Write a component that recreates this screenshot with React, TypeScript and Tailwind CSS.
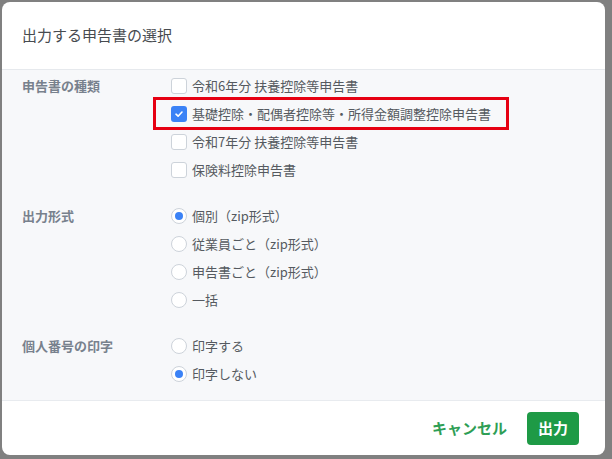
import React from 'react';

const FONT = '"Noto Sans CJK JP", "Noto Sans", sans-serif';

type Opt = { label: string; checked?: boolean; highlight?: boolean };

const kinds: Opt[] = [
  { label: '令和6年分 扶養控除等申告書' },
  { label: '基礎控除・配偶者控除等・所得金額調整控除申告書', checked: true, highlight: true },
  { label: '令和7年分 扶養控除等申告書' },
  { label: '保険料控除申告書' },
];

const formats: Opt[] = [
  { label: '個別（zip形式）', checked: true },
  { label: '従業員ごと（zip形式）' },
  { label: '申告書ごと（zip形式）' },
  { label: '一括' },
];

const printing: Opt[] = [{ label: '印字する' }, { label: '印字しない', checked: true }];

function Checkbox({ checked }: { checked?: boolean }) {
  if (checked) {
    return (
      <span className="w-4 h-4 rounded-[3px] bg-[#3b82f6] flex items-center justify-center flex-shrink-0">
        <svg width="10" height="10" viewBox="0 0 10 10" fill="none">
          <path d="M2 5.2 L4.1 7.2 L8 3" stroke="white" strokeWidth="1.6" strokeLinecap="round" strokeLinejoin="round" />
        </svg>
      </span>
    );
  }
  return <span className="w-4 h-4 rounded-[3px] border border-[#cdd3da] bg-white flex-shrink-0" />;
}

function Radio({ checked }: { checked?: boolean }) {
  return (
    <span className="w-4 h-4 rounded-full border border-[#cdd3da] bg-white flex items-center justify-center flex-shrink-0">
      {checked && <span className="w-2 h-2 rounded-full bg-[#3b82f6]" />}
    </span>
  );
}

function Section({ title, options, kind }: { title: string; options: Opt[]; kind: 'check' | 'radio' }) {
  return (
    <div className="grid grid-cols-[149px_1fr]">
      <div className="h-7 flex items-center text-[13px] font-bold text-[#78818d]">{title}</div>
      <div className="flex flex-col">
        {options.map((o) => (
          <div key={o.label} className="relative h-7 flex items-center gap-[5px] text-[13px] text-[#555a60]">
            {kind === 'check' ? <Checkbox checked={o.checked} /> : <Radio checked={o.checked} />}
            <span>{o.label}</span>
            {o.highlight && (
              <span className="absolute left-[-18px] top-[-3px] w-[356px] h-[33px] border-[3px] border-[#e60012]" />
            )}
          </div>
        ))}
      </div>
    </div>
  );
}

export default function App() {
  return (
    <div className="w-[612px] h-[459px] bg-[#808080] pt-[2px] pl-[2px]" style={{ fontFamily: FONT }}>
      <div className="w-[603px] h-[453px] bg-white rounded-lg overflow-hidden flex flex-col">
        <div className="h-[68px] flex items-center px-5 border-b border-[#e6e9ed] flex-shrink-0">
          <h1 className="text-[15px] text-[#474b50]">{'出力する申告書の選択'}</h1>
        </div>

        <div className="flex-1 bg-[#f7f8fa] px-5 pt-[2px] flex flex-col gap-[18px] border-b border-[#e8ebef]">
          <Section title="申告書の種類" options={kinds} kind="check" />
          <Section title="出力形式" options={formats} kind="radio" />
          <Section title="個人番号の印字" options={printing} kind="radio" />
        </div>

        <div className="h-[54px] flex items-center justify-end gap-5 pr-[26px] flex-shrink-0">
          <button className="text-[15px] font-bold text-[#2e9e55]">{'キャンセル'}</button>
          <button className="h-[33px] px-[11px] rounded bg-[#1e9a46] text-white text-[15px] font-bold">{'出力'}</button>
        </div>
      </div>
    </div>
  );
}
